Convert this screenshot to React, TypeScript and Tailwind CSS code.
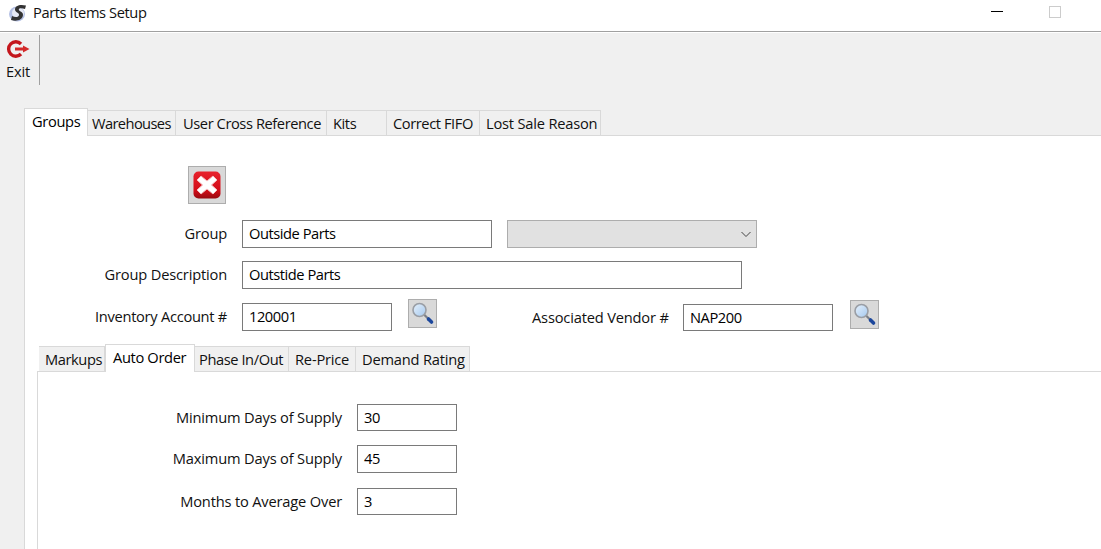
import React from "react";

const font = { fontFamily: '"Open Sans", "Noto Sans", sans-serif' };

function Magnifier({ className = "" }: { className?: string }) {
  return (
    <button className={`w-[29px] h-[29px] bg-[#d9d9d9] border border-[#adadad] flex items-center justify-center shrink-0 ${className}`}>
      <svg width="27" height="27" viewBox="0 0 27 27">
        <defs>
          <linearGradient id="glass" x1="0" y1="0" x2="1" y2="1">
            <stop offset="0" stopColor="#e6f1fc" />
            <stop offset="1" stopColor="#a4c8ee" />
          </linearGradient>
        </defs>
        <circle cx="10.5" cy="10" r="6.5" fill="url(#glass)" stroke="#9a9ea5" strokeWidth="1.6" />
        <path d="M15.5 15 L18.5 18" stroke="#7b7f86" strokeWidth="2.2" />
        <path d="M19.5 19 L22.5 22" stroke="#1c479c" strokeWidth="3.6" strokeLinecap="round" />
      </svg>
    </button>
  );
}

function Tab({ label, w, active, pad = "pl-[6px]", track = "tracking-[-0.42px]" }: { label: string; w: string; active?: boolean; pad?: string; track?: string }) {
  return active ? (
    <div className={`${w} h-[28px] -mr-px bg-white border-t border-x border-[#d9d9d9] -mb-px relative z-10 text-black pl-[7px] pt-[2px] whitespace-nowrap tracking-[-0.35px]`}>
      {label}
    </div>
  ) : (
    <div className={`${w} h-[25px] bg-[#f0f0f0] border-t border-r border-[#d9d9d9] ${pad} pt-[2px] text-[#111] whitespace-nowrap ${track}`}>
      {label}
    </div>
  );
}

function Field({ value, className = "" }: { value?: string; className?: string }) {
  return (
    <div className={`bg-white border border-[#7a7a7a] pl-[6px] pb-[2px] flex items-center text-black tracking-[-0.45px] ${className}`}>
      {value}
    </div>
  );
}

export default function App() {
  return (
    <div className="w-[1101px] h-[549px] overflow-hidden bg-[#f0f0f0] text-[14.67px] leading-[20px] tracking-[-0.18px] text-[#111] flex flex-col" style={font}>
      <div className="h-[31px] shrink-0 bg-white flex items-center pl-[9px] pb-[5px] relative">
        <svg width="18" height="18" viewBox="0 0 18 18" className="mr-[6px]">
          <ellipse cx="8" cy="10" rx="8" ry="7.5" fill="#b4c0e4" />
          <ellipse cx="9" cy="9" rx="6" ry="5.5" fill="#e6e9f5" />
          <path d="M17 1.5 C11 0 6 1.5 6 5.5 C6 8.5 10.5 8.5 10 11 C9.6 13.5 6 13.5 3 12 L2 16 C7 17.5 13.5 16.5 14 11 C14.3 7.5 9.8 7.5 9.8 5.5 C9.8 4 13 4 16 5 Z" fill="#333" />
        </svg>
        <span className="text-[#111] -mt-[2px] tracking-[-0.4px]">Parts Items Setup</span>
        <div className="absolute left-[991px] top-[11px] w-[12px] h-px bg-black" />
        <div className="absolute left-[1049px] top-[6px] w-[12px] h-[12px] border border-[#cccccc]" />
      </div>
      <div className="h-px shrink-0 bg-[#a0a0a0]" />
      <div className="h-px shrink-0 bg-white" />
      <div className="h-[75px] shrink-0 flex items-start pt-[2px]">
        <div className="w-[39px] h-[50px] flex flex-col items-center pt-[5px]">
          <svg width="24" height="18" viewBox="0 0 24 18" className="mr-[3px]">
            <path d="M15 4 A7.2 7.2 0 1 0 15 14" stroke="#c4161c" strokeWidth="3.4" fill="none" />
            <path d="M9 7.5 H17 V5.5 L23.5 9 L17 12.5 V10.5 H9 Z" fill="#d42a2a" />
          </svg>
          <span className="mr-[3px] mt-[3px]">Exit</span>
        </div>
        <div className="w-px h-[50px] bg-[#a0a0a0]" />
      </div>
      <div className="ml-[24px] flex items-end h-[27px] shrink-0 relative z-10">
        <Tab label="Groups" w="w-[64px]" active />
        <Tab label="Warehouses" w="w-[89px]" pad="pl-[5px]" track="tracking-[-0.6px]" />
        <Tab label="User Cross Reference" w="w-[151px]" pad="pl-[7px]" />
        <Tab label="Kits" w="w-[60px]" />
        <Tab label="Correct FIFO" w="w-[93px]" />
        <Tab label="Lost Sale Reason" w="w-[121px]" track="tracking-[-0.2px]" />
      </div>
      <div className="ml-[24px] flex-1 bg-white border-l border-t border-[#d9d9d9] flex flex-col">
        <div className="ml-[163px] mt-[30px] w-[38px] h-[38px] bg-[#d9d9d9] border border-[#adadad] flex items-center justify-center">
          <svg width="30" height="30" viewBox="0 0 30 30">
            <defs>
              <linearGradient id="red" x1="0" y1="0" x2="0" y2="1">
                <stop offset="0" stopColor="#e8222c" />
                <stop offset="0.7" stopColor="#d20c18" />
                <stop offset="1" stopColor="#980a10" />
              </linearGradient>
            </defs>
            <rect x="1.5" y="1.5" width="27" height="27" rx="5" fill="url(#red)" />
            <path d="M9 6 L15 11 L21 6 L25 10 L19.5 15 L25 20 L21 24 L15 19 L9 24 L5 20 L10.5 15 L5 10 Z" fill="#fff" stroke="#f4b9bc" strokeWidth="1" strokeLinejoin="round" />
          </svg>
        </div>

        <div className="flex items-center mt-[16px] h-[28px]">
          <div className="w-[202px] text-right pb-[2px]">Group</div>
          <Field value="Outside Parts" className="ml-[15px] w-[250px] h-[28px]" />
          <div className="ml-[15px] w-[250px] h-[28px] bg-[#e1e1e1] border border-[#adadad] flex items-center justify-end pr-[4px]">
            <svg width="12" height="12" viewBox="0 0 12 12" fill="none">
              <path d="M1.5 4 L6 8.5 L10.5 4" stroke="#444" strokeWidth="1" />
            </svg>
          </div>
        </div>
        <div className="flex items-center mt-[13px] h-[28px]">
          <div className="w-[202px] text-right pb-[2px]">Group Description</div>
          <Field value="Outstide Parts" className="ml-[15px] w-[500px] h-[28px]" />
        </div>
        <div className="flex items-start mt-[10px] h-[32px]">
          <div className="w-[202px] text-right mt-[7px] tracking-[-0.28px]">Inventory Account #</div>
          <Field value="120001" className="ml-[15px] mt-[4px] w-[150px] h-[28px]" />
          <Magnifier className="ml-[16px]" />
          <div className="ml-[95px] w-[136px] text-right whitespace-nowrap mt-[8px]">Associated Vendor #</div>
          <Field value="NAP200" className="ml-[15px] mt-[5px] w-[150px] h-[27px]" />
          <Magnifier className="ml-[17px] mt-[1px]" />
        </div>

        <div className="ml-[14px] mt-[12px] flex items-end h-[28px] relative z-10">
          <Tab label="Markups" w="w-[66px]" />
          <Tab label="Auto Order" w="w-[90px]" active />
          <Tab label="Phase In/Out" w="w-[95px]" pad="pl-[5px]" />
          <Tab label="Re-Price" w="w-[67px]" track="tracking-[-0.2px]" />
          <Tab label="Demand Rating" w="w-[114px]" track="tracking-[-0.2px]" />
        </div>
        <div className="ml-[12px] flex-1 border-l border-t border-[#d9d9d9] flex flex-col">
          <div className="flex items-center mt-[32px] h-[27px]">
            <div className="w-[304px] text-right pb-[2px]">Minimum Days of Supply</div>
            <Field value="30" className="ml-[15px] w-[100px] h-[27px]" />
          </div>
          <div className="flex items-center mt-[14px] h-[28px]">
            <div className="w-[304px] text-right pb-[2px]">Maximum Days of Supply</div>
            <Field value="45" className="ml-[15px] w-[100px] h-[28px]" />
          </div>
          <div className="flex items-center mt-[15px] h-[27px]">
            <div className="w-[304px] text-right pb-[2px]">Months to Average Over</div>
            <Field value="3" className="ml-[15px] w-[100px] h-[27px]" />
          </div>
        </div>
      </div>
    </div>
  );
}
